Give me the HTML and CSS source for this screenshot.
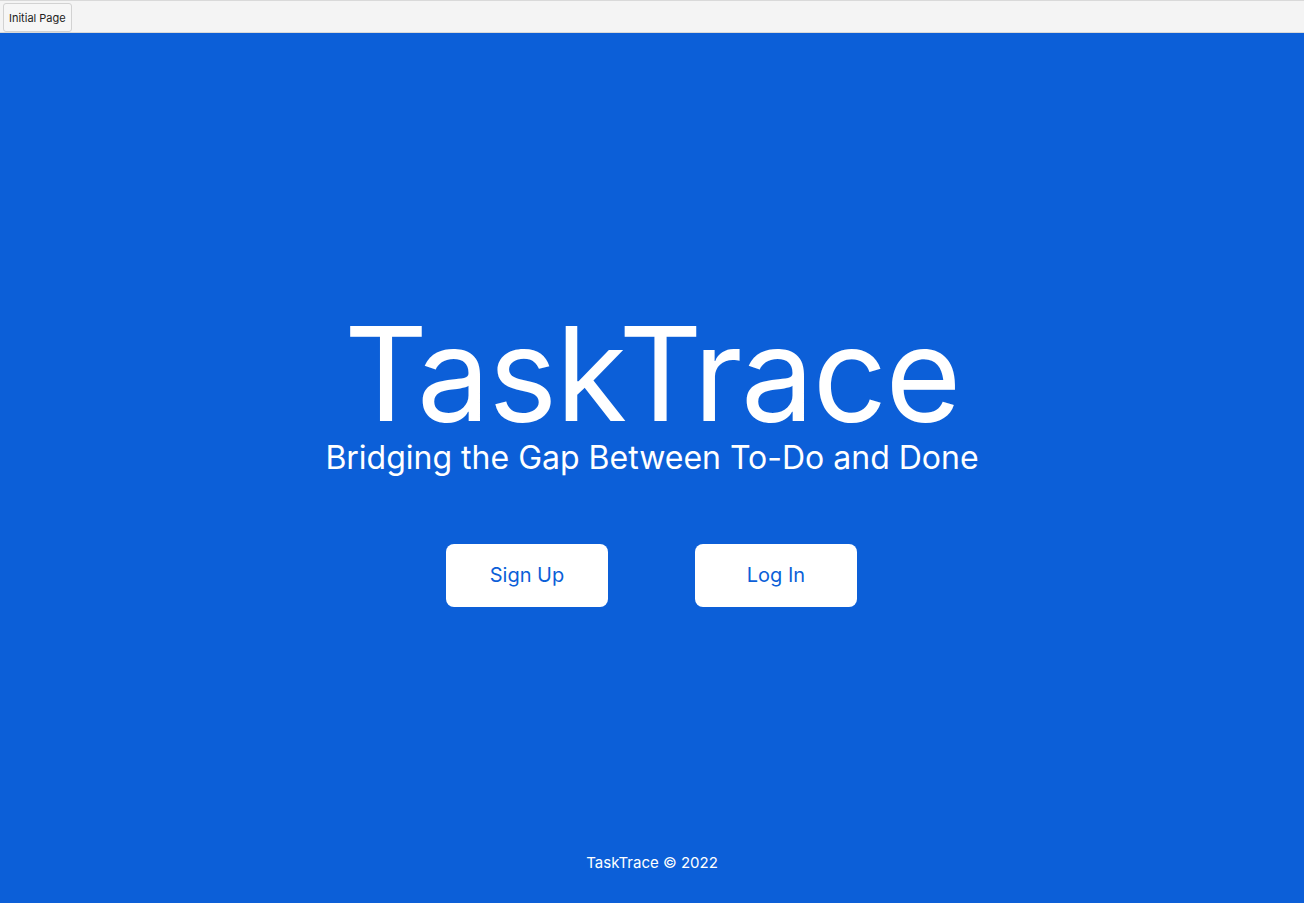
FILE: index.html
```html
<!DOCTYPE html>
<html lang="en">
<head>
<meta charset="utf-8">
<title>TaskTrace</title>
<link rel="stylesheet" href="styles.css">
</head>
<body>
<div class="tabbar">
  <button class="tab">Initial Page</button>
</div>
<main class="page">
  <section class="hero">
    <h1 class="title">TaskTrace</h1>
    <p class="subtitle">Bridging the Gap Between To-Do and Done</p>
    <div class="actions">
      <button class="btn">Sign Up</button>
      <button class="btn">Log In</button>
    </div>
  </section>
  <footer class="footer">TaskTrace © 2022</footer>
</main>
</body>
</html>
```
FILE: styles.css
```css
* { box-sizing: border-box; }
html, body { margin: 0; padding: 0; height: 100%; }
body {
  font-family: Inter, "Noto Sans", sans-serif;
  display: flex;
  flex-direction: column;
  background: #0c5fd8;
}
.tabbar {
  height: 33px;
  background: #f4f4f4;
  border-top: 1px solid #d9d9d9;
  border-bottom: 1px solid #d9d9d9;
  padding: 2px 3px;
  display: flex;
  align-items: flex-start;
}
.tab {
  font-family: Inter, sans-serif;
  font-size: 11px;
  color: #222;
  background: #f6f6f6;
  border: 1px solid #d2d2d2;
  border-radius: 3px;
  height: 29px;
  padding: 0 5px;
}
.page {
  flex: 1;
  display: flex;
  flex-direction: column;
  color: #fff;
}
.hero {
  flex: 1;
  display: flex;
  flex-direction: column;
  align-items: center;
  justify-content: center;
  padding-top: 30px;
}
.title {
  margin: 0;
  font-size: 130px;
  font-weight: 400;
  line-height: 1;
  letter-spacing: -1.4px;
}
.subtitle {
  margin: 0;
  font-size: 32px;
  font-weight: 400;
  line-height: 1.2;
}
.actions {
  display: flex;
  gap: 87px;
  margin-top: 66px;
  padding-right: 1px;
}
.btn {
  width: 162px;
  height: 63px;
  background: #fff;
  color: #0c5fd8;
  border: none;
  border-radius: 8px;
  font-family: Inter, sans-serif;
  font-size: 20px;
}
.footer {
  text-align: center;
  font-size: 15px;
  padding-bottom: 31px;
}
```
